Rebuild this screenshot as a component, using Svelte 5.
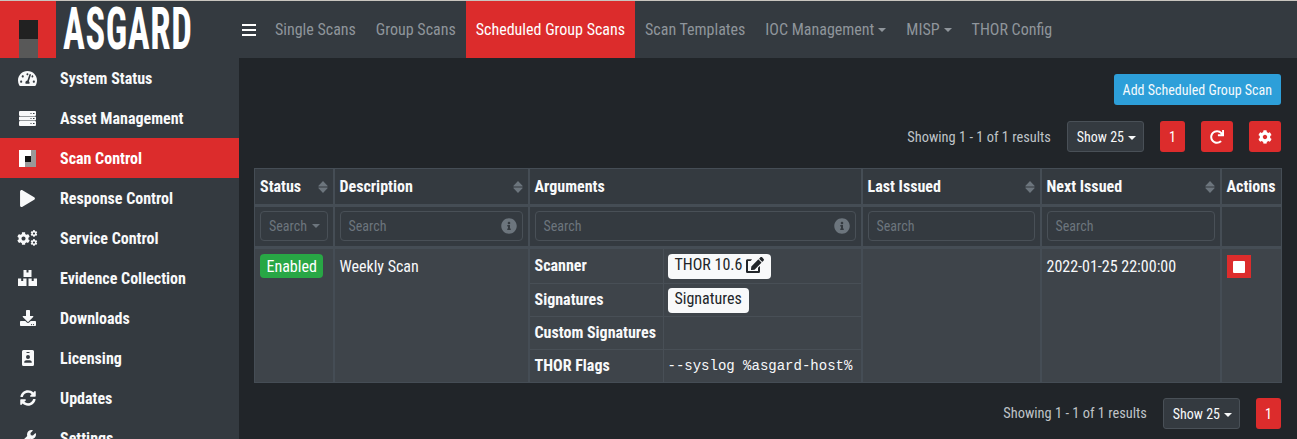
<script>
  const gear = "M487.4 315.7l-42.6-24.6c4.3-23.2 4.3-47 0-70.2l42.6-24.6c4.9-2.8 7.1-8.6 5.5-14-11.1-35.6-30-67.8-54.7-94.6-3.8-4.1-10-5.1-14.8-2.3L380.8 110c-17.9-15.4-38.5-27.3-60.8-35.1V25.8c0-5.6-3.9-10.5-9.4-11.7-36.7-8.2-74.3-7.8-109.2 0-5.5 1.2-9.4 6.1-9.4 11.7V75c-22.2 7.9-42.8 19.8-60.8 35.1L88.7 85.5c-4.9-2.8-11-1.9-14.8 2.3-24.7 26.7-43.6 58.9-54.7 94.6-1.7 5.4.6 11.2 5.5 14L67.3 221c-4.3 23.2-4.3 47 0 70.2l-42.6 24.6c-4.9 2.8-7.1 8.6-5.5 14 11.1 35.6 30 67.8 54.7 94.6 3.8 4.1 10 5.1 14.8 2.3l42.6-24.6c17.9 15.4 38.5 27.3 60.8 35.1v49.2c0 5.6 3.9 10.5 9.4 11.7 36.7 8.2 74.3 7.8 109.2 0 5.5-1.2 9.4-6.1 9.4-11.7v-49.2c22.2-7.9 42.8-19.8 60.8-35.1l42.6 24.6c4.9 2.8 11 1.9 14.8-2.3 24.7-26.7 43.6-58.9 54.7-94.6 1.5-5.5-.7-11.3-5.6-14.1zM256 336c-44.1 0-80-35.9-80-80s35.9-80 80-80 80 35.9 80 80-35.9 80-80 80z";
  const info = "M256 8C119 8 8 119 8 256s111 248 248 248 248-111 248-248S393 8 256 8zm0 110c23.2 0 42 18.8 42 42s-18.8 42-42 42-42-18.8-42-42 18.8-42 42-42zm56 254c0 6.6-5.4 12-12 12h-88c-6.6 0-12-5.4-12-12v-24c0-6.6 5.4-12 12-12h12v-64h-12c-6.6 0-12-5.4-12-12v-24c0-6.6 5.4-12 12-12h64c6.6 0 12 5.4 12 12v100h12c6.6 0 12 5.4 12 12v24z";

  const sideItems = [
    { label: "System Status", icon: "gauge" },
    { label: "Asset Management", icon: "server" },
    { label: "Scan Control", icon: "logo", active: true },
    { label: "Response Control", icon: "play" },
    { label: "Service Control", icon: "cogs" },
    { label: "Evidence Collection", icon: "boxes" },
    { label: "Downloads", icon: "download" },
    { label: "Licensing", icon: "badge" },
    { label: "Updates", icon: "sync" },
    { label: "Settings", icon: "wrench" }
  ];

  const tabs = [
    { label: "Single Scans" },
    { label: "Group Scans" },
    { label: "Scheduled Group Scans", active: true },
    { label: "Scan Templates" },
    { label: "IOC Management", caret: true },
    { label: "MISP", caret: true },
    { label: "THOR Config" }
  ];
</script>

{#snippet sideIcon(name)}
  {#if name === "gauge"}
    <svg viewBox="0 0 576 512" width="19" height="17"><path d="M288 32C128.94 32 0 160.94 0 320c0 52.8 14.25 102.26 39.06 144.8 5.61 9.62 16.3 15.2 27.44 15.2h443c11.14 0 21.83-5.58 27.44-15.2C561.75 422.26 576 372.8 576 320c0-159.06-128.94-288-288-288zm0 64c14.71 0 26.58 10.13 30.32 23.65-1.11 2.26-2.64 4.23-3.45 6.67l-9.22 27.67c-5.13 3.49-10.97 6.01-17.64 6.01-17.67 0-32-14.33-32-32S270.33 96 288 96zM96 384c-17.67 0-32-14.33-32-32s14.33-32 32-32 32 14.33 32 32-14.33 32-32 32zm48-160c-17.67 0-32-14.33-32-32s14.33-32 32-32 32 14.33 32 32-14.33 32-32 32zm246.77-72.41l-61.33 184C343.13 347.33 352 364.54 352 384c0 11.72-3.38 22.55-8.88 32H232.88c-5.5-9.45-8.88-20.28-8.88-32 0-33.94 26.5-61.43 59.9-63.59l61.34-184.01c4.17-12.56 17.73-19.45 30.36-15.17 12.57 4.19 19.35 17.79 15.17 30.36zm14.66 57.2l15.52-46.55c3.47-1.29 7.13-2.23 11.05-2.23 17.67 0 32 14.33 32 32s-14.33 32-32 32c-11.38-.01-20.89-6.28-26.57-15.22zM480 384c-17.67 0-32-14.33-32-32s14.33-32 32-32 32 14.33 32 32-14.33 32-32 32z"/></svg>
  {:else if name === "server"}
    <svg viewBox="0 0 17 15" width="17" height="15"><path fill-rule="evenodd" d="M1 0h15a1 1 0 0 1 1 1v3a1 1 0 0 1-1 1H1a1 1 0 0 1-1-1V1a1 1 0 0 1 1-1zm10.5 2v1h1V2zm2.5 0v1h1.500V2zM1 5.500h15a1 1 0 0 1 1 1v2a1 1 0 0 1-1 1H1a1 1 0 0 1-1-1v-2a1 1 0 0 1 1-1zm10.500 1.500v1h1V7zM14 7v1h1.500V7zM1 10h15a1 1 0 0 1 1 1v3a1 1 0 0 1-1 1H1a1 1 0 0 1-1-1v-3a1 1 0 0 1 1-1zm10.500 2v1h1v-1zm2.500 0v1h1.500v-1z"/></svg>
  {:else if name === "logo"}
    <span class="mini-logo"><i></i></span>
  {:else if name === "play"}
    <svg viewBox="0 0 448 512" width="15" height="17"><path d="M424.400 214.700L72.400 6.600C43.800-10.300 0 6.100 0 47.900V464c0 37.500 40.700 60.100 72.400 41.300l352-208c31.400-18.500 31.500-64.100 0-82.600z"/></svg>
  {:else if name === "cogs"}
    <svg viewBox="0 0 21 16" width="21" height="16">
      <path transform="translate(0 2) scale(.0255)" d={gear}/>
      <path transform="translate(13.500 0) scale(.0135)" d={gear}/>
      <path transform="translate(13.500 9) scale(.0135)" d={gear}/>
    </svg>
  {:else if name === "boxes"}
    <svg viewBox="0 0 19 16" width="19" height="16"><path fill-rule="evenodd" d="M5.500 0h8v7h-8zM8.500 0v2.500h2V0zM0 8.500h8.500V16H0zM3.200 8.500V11h2V8.500zM10.500 8.500H19V16h-8.500zM13.700 8.500V11h2V8.500z"/></svg>
  {:else if name === "download"}
    <svg viewBox="0 0 512 512" width="16" height="16"><path d="M216 0h80c13.300 0 24 10.700 24 24v168h87.700c17.800 0 26.700 21.500 14.100 34.100L269.700 378.300c-7.500 7.500-19.800 7.500-27.300 0L90.100 226.100c-12.600-12.600-3.700-34.100 14.100-34.100H192V24c0-13.300 10.700-24 24-24zm296 376v112c0 13.300-10.700 24-24 24H24c-13.300 0-24-10.700-24-24V376c0-13.300 10.700-24 24-24h146.700l49 49c20.100 20.100 52.500 20.100 72.600 0l49-49H488c13.300 0 24 10.700 24 24zm-124 88c0-11-9-20-20-20s-20 9-20 20 9 20 20 20 20-9 20-20zm64 0c0-11-9-20-20-20s-20 9-20 20 9 20 20 20 20-9 20-20z"/></svg>
  {:else if name === "badge"}
    <svg viewBox="0 0 12 16" width="12" height="16"><path fill-rule="evenodd" d="M1.500 0h9A1.500 1.500 0 0 1 12 1.500v13a1.500 1.500 0 0 1-1.500 1.500h-9A1.500 1.500 0 0 1 0 14.500v-13A1.500 1.500 0 0 1 1.500 0zM4.500 2v1h3V2zM6 5a2 2 0 1 0 0 4 2 2 0 0 0 0-4zM2.800 12.800h6.400c.4 0 .6-.3.600-.6 0-1.100-1-2-2.100-2H4.300c-1.100 0-2.100.9-2.100 2 0 .3.200.6.600.6z"/></svg>
  {:else if name === "sync"}
    <svg viewBox="0 0 512 512" width="16" height="16"><path d="M370.720 133.280C339.458 104.008 298.888 87.962 255.848 88c-77.458.068-144.328 53.178-162.791 126.850-1.344 5.363-6.122 9.150-11.651 9.150H24.103c-7.498 0-13.194-6.807-11.807-14.176C33.933 94.924 134.813 8 256 8c66.448 0 126.791 26.136 171.315 68.685L463.030 40.970C478.149 25.851 504 36.559 504 57.941V192c0 13.255-10.745 24-24 24H345.941c-21.382 0-32.090-25.851-16.971-40.971l41.750-41.749zM32 296h134.059c21.382 0 32.090 25.851 16.971 40.971l-41.750 41.750c31.262 29.273 71.835 45.319 114.876 45.280 77.418-.07 144.315-53.144 162.787-126.849 1.344-5.363 6.122-9.150 11.651-9.150h57.304c7.498 0 13.194 6.807 11.807 14.176C478.067 417.076 377.187 504 256 504c-66.448 0-126.791-26.136-171.315-68.685L48.970 471.030C33.851 486.149 8 475.441 8 454.059V320c0-13.255 10.745-24 24-24z"/></svg>
  {:else}
    <svg viewBox="0 0 512 512" width="16" height="16"><path d="M507.730 109.100c-2.240-9.030-13.540-12.090-20.120-5.510l-74.360 74.360-67.880-11.310-11.310-67.880 74.360-74.360c6.620-6.620 3.430-17.900-5.660-20.160-47.380-11.740-99.550.91-136.580 37.930-39.640 39.640-50.550 97.100-34.050 147.200L18.740 402.760c-24.990 24.990-24.990 65.510 0 90.500 24.990 24.990 65.510 24.990 90.500 0l213.210-213.210c50.120 16.710 107.470 5.680 147.370-34.220 37.070-37.070 49.700-89.320 37.910-136.730z"/></svg>
  {/if}
{/snippet}

{#snippet sortIcon()}
  <svg class="sort" viewBox="0 0 10 12" width="10" height="12"><path d="M5 0l4.500 4.800a.4.4 0 0 1-.3.700H.8a.4.4 0 0 1-.3-.7zM5 12L.5 7.200a.4.4 0 0 1 .3-.7h8.400a.4.4 0 0 1 .3.700z"/></svg>
{/snippet}

{#snippet searchBox(withInfo)}
  <div class="search">
    <span>Search</span>
    {#if withInfo}
      <svg class="info" viewBox="0 0 512 512" width="16" height="16"><path d={info}/></svg>
    {/if}
  </div>
{/snippet}

<div class="page">
  <header class="topbar">
    <div class="brand">
      <div class="logo"><i></i></div>
      <div class="wordmark"><span>ASGARD</span></div>
    </div>
    <nav class="tabs">
      <svg class="bars" viewBox="0 0 14 12" width="14" height="12"><path d="M0 0h14v2H0zM0 5h14v2H0zM0 10h14v2H0z"/></svg>
      {#each tabs as tab}
        <span class="tab" class:active={tab.active}>{tab.label}{#if tab.caret}<b class="caret"></b>{/if}</span>
      {/each}
    </nav>
  </header>

  <div class="body">
    <aside class="sidebar">
      {#each sideItems as item}
        <div class="side-item" class:active={item.active}>
          <span class="side-icon">{@render sideIcon(item.icon)}</span>
          <span>{item.label}</span>
        </div>
      {/each}
    </aside>

    <main class="main">
      <div class="toolbar">
        <button class="add">Add Scheduled Group Scan</button>
      </div>

      <div class="pager top">
        <span class="showing">Showing 1 - 1 of 1 results</span>
        <button class="show">Show 25<b class="caret"></b></button>
        <button class="red num">1</button>
        <button class="red square">
          <svg viewBox="0 0 512 512" width="14" height="14"><path d="M500.330 0h-47.410a12 12 0 0 0-12 12.570l4 82.760A247.420 247.420 0 0 0 256 8C119.340 8 7.900 119.530 8 256.190 8.100 393.070 119.100 504 256 504a247.100 247.100 0 0 0 166.180-63.910 12 12 0 0 0 .48-17.430l-34-34a12 12 0 0 0-16.380-.55A176 176 0 1 1 402.100 157.800l-101.530-4.870a12 12 0 0 0-12.570 12v47.410a12 12 0 0 0 12 12h200.330a12 12 0 0 0 12-12V12a12 12 0 0 0-12-12z"/></svg>
        </button>
        <button class="red square">
          <svg viewBox="0 0 512 512" width="14" height="14"><path d={gear}/></svg>
        </button>
      </div>

      <table class="grid">
        <colgroup>
          <col class="c-status" />
          <col class="c-desc" />
          <col class="c-args" />
          <col class="c-last" />
          <col class="c-next" />
          <col class="c-actions" />
        </colgroup>
        <thead>
          <tr class="heads">
            <th><div class="th">Status{@render sortIcon()}</div></th>
            <th><div class="th">Description{@render sortIcon()}</div></th>
            <th><div class="th">Arguments</div></th>
            <th><div class="th">Last Issued{@render sortIcon()}</div></th>
            <th><div class="th">Next Issued{@render sortIcon()}</div></th>
            <th><div class="th">Actions</div></th>
          </tr>
          <tr class="filters">
            <td><div class="search"><span>Search</span><b class="caret dim"></b></div></td>
            <td>{@render searchBox(true)}</td>
            <td>{@render searchBox(true)}</td>
            <td>{@render searchBox(false)}</td>
            <td>{@render searchBox(false)}</td>
            <td></td>
          </tr>
        </thead>
        <tbody>
          <tr class="row">
            <td><span class="enabled">Enabled</span></td>
            <td>Weekly Scan</td>
            <td class="args">
              <table class="inner">
                <tbody>
                  <tr>
                    <th>Scanner</th>
                    <td><span class="chip">THOR 10.6
                      <svg viewBox="0 0 576 512" width="18" height="16"><path d="M402.600 83.200l90.200 90.200c3.800 3.800 3.800 10 0 13.800L274.400 405.600l-92.800 10.300c-12.400 1.400-22.900-9.100-21.500-21.500l10.300-92.800L388.800 83.200c3.800-3.800 10-3.800 13.800 0zm162-22.900l-48.800-48.800c-15.200-15.200-39.900-15.200-55.200 0l-35.400 35.400c-3.800 3.800-3.800 10 0 13.800l90.200 90.200c3.800 3.800 10 3.800 13.800 0l35.400-35.400c15.200-15.300 15.200-40 0-55.200zM384 346.200V448H64V128h73.800c2.400 0 4.600-1 6.400-2.600l40-40c6.100-6.100 1.700-16.400-6.400-16.400H48C21.500 69 0 90.500 0 117v352c0 26.500 21.500 48 48 48h352c26.500 0 48-21.500 48-48V306.200c0-8.200-9.900-12.200-15.700-6.400l-40 40c-1.600 1.700-2.300 3.900-2.300 6.400z"/></svg>
                    </span></td>
                  </tr>
                  <tr>
                    <th>Signatures</th>
                    <td><span class="chip">Signatures</span></td>
                  </tr>
                  <tr>
                    <th>Custom Signatures</th>
                    <td></td>
                  </tr>
                  <tr>
                    <th>THOR Flags</th>
                    <td><code>--syslog %asgard-host%</code></td>
                  </tr>
                </tbody>
              </table>
            </td>
            <td></td>
            <td>2022-01-25 22:00:00</td>
            <td><button class="stop"><i></i></button></td>
          </tr>
        </tbody>
      </table>

      <div class="pager bottom">
        <span class="showing">Showing 1 - 1 of 1 results</span>
        <button class="show">Show 25<b class="caret"></b></button>
        <button class="red num">1</button>
      </div>
    </main>
  </div>
</div>

<style>
  :global(body) {
    margin: 0;
    background: #212529;
    overflow: hidden;
  }

  .page {
    height: 439px;
    overflow: hidden;
    border-top: 1px solid #c9c5bf;
    box-sizing: border-box;
    font-family: "Roboto Condensed", Roboto, sans-serif;
    font-stretch: 75%;
    font-size: 16px;
    color: #f8f9fa;
  }

  button {
    font: inherit;
    font-stretch: inherit;
    font-size: 14px;
    border: 0;
    cursor: pointer;
  }

  .topbar {
    display: flex;
    height: 57px;
    background: #343a40;
  }

  .brand {
    display: flex;
    width: 231px;
    flex: none;
  }

  .logo {
    width: 56px;
    height: 57px;
    flex: none;
    background: #dc2c2c;
    display: flex;
    justify-content: center;
    align-items: flex-end;
  }

  .logo i {
    display: block;
    width: 19px;
    height: 38px;
    background: linear-gradient(#212121 50%, #585858 50%);
  }

  .wordmark {
    flex: 1;
    min-width: 0;
    padding: 7px 0 0 7px;
  }

  .wordmark span {
    display: block;
    width: fit-content;
    font-weight: 700;
    font-size: 59px;
    line-height: 42px;
    letter-spacing: 1px;
    color: #fff;
    transform-origin: 0 0;
    transform: scaleX(0.62);
    white-space: nowrap;
  }

  .tabs {
    display: flex;
    align-items: stretch;
    flex: 1;
  }

  .bars {
    align-self: center;
    fill: #fff;
    margin: 0 9px 0 11px;
  }

  .tab {
    display: flex;
    align-items: center;
    padding: 0 10px;
    color: #8f959b;
  }

  .tab.active {
    background: #dc2c2c;
    color: #fff;
  }

  .caret {
    display: inline-block;
    margin-left: 4px;
    border-top: 4px solid currentColor;
    border-left: 4px solid transparent;
    border-right: 4px solid transparent;
    vertical-align: middle;
  }

  .caret.dim {
    margin-left: 5px;
    color: #6c757d;
  }

  .body {
    display: flex;
    height: 381px;
  }

  .sidebar {
    width: 239px;
    flex: none;
    background: #343a40;
    overflow: hidden;
  }

  .side-item {
    display: flex;
    align-items: center;
    height: 40px;
    font-weight: 700;
    color: #f8f9fa;
  }

  .side-item.active {
    background: #dc2c2c;
    color: #fff;
  }

  .side-icon {
    width: 60px;
    padding-right: 5px;
    flex: none;
    display: flex;
    justify-content: center;
    fill: #f8f9fa;
    box-sizing: border-box;
  }

  .mini-logo {
    width: 17px;
    height: 17px;
    background: linear-gradient(90deg, #fff 68%, #999 68%);
    display: flex;
    align-items: flex-end;
  }

  .mini-logo i {
    display: block;
    width: 6px;
    height: 11px;
    margin-left: 6px;
    background: linear-gradient(#111 55%, #999 55%);
  }

  .main {
    flex: 1;
    padding: 16px 16px 0 15px;
    min-width: 0;
  }

  .toolbar {
    display: flex;
    justify-content: flex-end;
  }

  .add {
    height: 31px;
    padding: 0 9px;
    background: #2d9fd9;
    color: #f4fafd;
    border-radius: 3px;
  }

  .pager {
    display: flex;
    justify-content: flex-end;
    align-items: center;
    height: 31px;
  }

  .pager.top {
    margin-top: 16px;
  }

  .pager.top .showing {
    padding-top: 1px;
  }

  .pager.bottom {
    margin-top: 15px;
  }

  .showing {
    font-size: 14.400px;
    color: #bfc3c7;
    margin-right: 16px;
  }

  .show {
    height: 31px;
    padding: 0 7px 0 9px;
    background: #343a40;
    color: #f8f9fa;
    border: 1px solid #495057;
    border-radius: 3px;
  }

  .red {
    height: 31px;
    background: #dc2c2c;
    color: #fff;
    border-radius: 3px;
    fill: #fff;
    display: flex;
    align-items: center;
    justify-content: center;
    padding: 0;
  }

  .num {
    width: 25px;
    margin-left: 16px;
  }

  .square {
    width: 32px;
    margin-left: 16px;
  }

  .grid {
    margin-top: 16px;
    width: 1027px;
    table-layout: fixed;
    border-collapse: collapse;
    background: #343a40;
  }

  .c-status { width: 79px; }
  .c-desc { width: 195px; }
  .c-args { width: 333px; }
  .c-last { width: 179px; }
  .c-next { width: 180px; }
  .c-actions { width: 61px; }

  .grid > thead > tr > th,
  .grid > thead > tr > td,
  .grid > tbody > tr > td {
    border: 2px solid #454d55;
    padding: 0 5px;
    vertical-align: top;
    text-align: left;
  }

  .grid > thead > tr > :first-child,
  .grid > tbody > tr > :first-child {
    border-left-width: 1px;
  }

  .grid > thead > tr > :last-child,
  .grid > tbody > tr > :last-child {
    border-right-width: 1px;
  }

  .heads {
    height: 37px;
  }

  .grid > thead > .heads > th {
    border-top-width: 1px;
    border-bottom-width: 3px;
    vertical-align: middle;
  }

  .th {
    display: flex;
    justify-content: space-between;
    align-items: center;
  }

  .sort {
    fill: #6c757d;
  }

  .filters {
    height: 42px;
  }

  .grid > thead > .filters > td {
    vertical-align: top;
    padding-top: 4px;
    border-bottom-width: 3px;
  }

  .search {
    display: flex;
    align-items: center;
    height: 30px;
    box-sizing: border-box;
    padding: 0 5px 0 8px;
    border: 1px solid #495057;
    border-radius: 4px;
    font-size: 14px;
    color: #6c757d;
  }

  .search span {
    flex: 1;
  }

  .filters td:first-child .search span {
    flex: none;
  }

  .info {
    fill: #6c757d;
  }

  .grid > tbody > .row > td {
    background: #3e444a;
    padding-top: 5px;
    line-height: 26px;
    border-bottom-width: 1px;
  }

  .grid > tbody > .row > td.args {
    padding: 0;
  }

  .enabled {
    display: block;
    width: fit-content;
    padding: 0 6.500px;
    height: 24px;
    line-height: 26px;
    background: #28a745;
    border-radius: 4px;
    color: #fff;
  }

  .inner {
    width: 100%;
    border-collapse: collapse;
    table-layout: fixed;
  }

  .inner tr {
    height: 33px;
  }

  .inner tr:first-child {
    height: 34px;
  }

  .inner th,
  .inner td {
    padding: 0 5px;
    border-bottom: 1px solid #484f56;
    text-align: left;
    line-height: 26px;
  }

  .inner td {
    padding-left: 4px;
  }

  .inner tr:last-child th,
  .inner tr:last-child td {
    border-bottom: 0;
  }

  .inner th {
    width: 123px;
    border-right: 1px solid #484f56;
  }

  .chip {
    display: inline-flex;
    align-items: center;
    gap: 4px;
    height: 25px;
    box-sizing: border-box;
    padding: 0 7px 2px;
    vertical-align: middle;
    background: #f8f9fa;
    color: #212529;
    border-radius: 4px;
  }

  .chip svg {
    fill: #212529;
  }

  code {
    font-family: "Liberation Mono", monospace;
    font-stretch: normal;
    font-size: 14px;
    color: #f8f9fa;
    white-space: nowrap;
  }

  .stop {
    width: 24px;
    height: 23px;
    margin-top: 1px;
    background: #dc2c2c;
    padding: 0;
    display: flex;
    align-items: center;
    justify-content: center;
  }

  .stop i {
    display: block;
    width: 12px;
    height: 12px;
    background: #fff;
    border-radius: 1px;
  }
</style>
